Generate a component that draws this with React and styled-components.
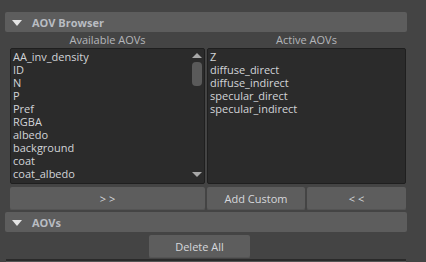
import React from "react";
import styled, { createGlobalStyle } from "styled-components";

const GlobalStyle = createGlobalStyle`
  html, body {
    margin: 0;
    padding: 0;
    background: #444444;
    overflow: hidden;
  }
  body {
    font-family: "Open Sans", "Liberation Sans", sans-serif;
  }
`;

const Page = styled.div`
  width: 426px;
  height: 262px;
  padding: 12px 19px 0 5px;
  box-sizing: border-box;
  display: flex;
  flex-direction: column;
`;

const SectionHeader = styled.div`
  height: 20px;
  background: #5d5d5d;
  border-radius: 2px;
  display: flex;
  align-items: center;
  gap: 10px;
  padding-left: 7px;
  color: #b9bcc2;
  font-size: 11px;
  font-weight: 700;
`;

const Arrow = styled.span`
  width: 0;
  height: 0;
  border-left: 5.5px solid transparent;
  border-right: 5.5px solid transparent;
  border-top: 6px solid #e4e4e4;
  margin-top: 1px;
`;

const Body = styled.div`
  display: grid;
  grid-template-columns: 195px 199px;
  column-gap: 2px;
  padding-left: 5px;
`;

const ColumnTitle = styled.div`
  height: 16px;
  line-height: 16px;
  text-align: center;
  font-size: 11px;
  color: #b4b6ba;
`;

const ListBox = styled.div`
  height: 136px;
  box-sizing: border-box;
  background: #2b2b2b;
  border: 1px solid #1f1f1f;
  border-radius: 2px;
  display: flex;
  overflow: hidden;
`;

const Items = styled.div`
  flex: 1;
  padding: 1px 0 0 2px;
  overflow: hidden;
`;

const Item = styled.div`
  height: 13px;
  line-height: 13px;
  font-size: 11px;
  color: #d2d4d8;
  white-space: nowrap;
`;

const ScrollBar = styled.div`
  width: 12px;
  margin-right: 1px;
  display: flex;
  flex-direction: column;
  align-items: center;
  padding-top: 4px;
`;

const ScrollArrow = styled.span`
  width: 0;
  height: 0;
  border-left: 5px solid transparent;
  border-right: 5px solid transparent;
  ${(p) =>
    p.$up
      ? "border-bottom: 5px solid #a8a8a8;"
      : "border-top: 5px solid #a8a8a8;"}
`;

const Thumb = styled.div`
  width: 10px;
  height: 24px;
  margin-top: 4px;
  border-radius: 4px;
  background: #5a5a5a;
`;

const Spacer = styled.div`
  flex: 1;
`;

const ButtonRow = styled.div`
  display: grid;
  grid-template-columns: ${(p) => p.$cols || "1fr"};
  gap: 2px;
  margin-top: 3px;
`;

const Button = styled.div`
  height: 23px;
  box-sizing: border-box;
  background: #5d5d5d;
  border-radius: 2px;
  box-shadow: inset 0 -1px 0 #545454;
  display: flex;
  align-items: center;
  justify-content: center;
  font-size: 11px;
  color: #d6d8dc;
  white-space: pre;
  ${(p) => p.$width && `width: ${p.$width}px;`}
`;

const Gap = styled.div`
  height: ${(p) => p.$h}px;
`;

const DeleteRow = styled.div`
  display: flex;
  padding-left: 144px;
  margin-top: 3px;
`;

const BottomLine = styled.div`
  height: 2px;
  margin: 1px 0 0 1px;
  width: 400px;
  background: #2a2a2a;
  border-bottom: 1px solid #555;
`;

const available = [
  "AA_inv_density",
  "ID",
  "N",
  "P",
  "Pref",
  "RGBA",
  "albedo",
  "background",
  "coat",
  "coat_albedo",
  "coat_direct",
];

const active = [
  "Z",
  "diffuse_direct",
  "diffuse_indirect",
  "specular_direct",
  "specular_indirect",
];

const App = () => {
  return (
    <Page>
      <GlobalStyle />
      <SectionHeader>
        <Arrow />
        AOV Browser
      </SectionHeader>
      <Body>
        <ColumnTitle>Available AOVs</ColumnTitle>
        <ColumnTitle>Active AOVs</ColumnTitle>
        <ListBox>
          <Items>
            {available.map((a) => (
              <Item key={a}>{a}</Item>
            ))}
          </Items>
          <ScrollBar>
            <ScrollArrow $up />
            <Thumb />
            <Spacer />
            <ScrollArrow />
            <Gap $h={6} />
          </ScrollBar>
        </ListBox>
        <ListBox>
          <Items>
            {active.map((a) => (
              <Item key={a}>{a}</Item>
            ))}
          </Items>
        </ListBox>
        <ButtonRow>
          <Button>{"> >"}</Button>
        </ButtonRow>
        <ButtonRow $cols="98px 99px">
          <Button>Add Custom</Button>
          <Button>{"< <"}</Button>
        </ButtonRow>
      </Body>
      <Gap $h={2} />
      <SectionHeader>
        <Arrow />
        AOVs
      </SectionHeader>
      <DeleteRow>
        <Button $width={101}>Delete All</Button>
      </DeleteRow>
      <BottomLine />
    </Page>
  );
};

export default App;
